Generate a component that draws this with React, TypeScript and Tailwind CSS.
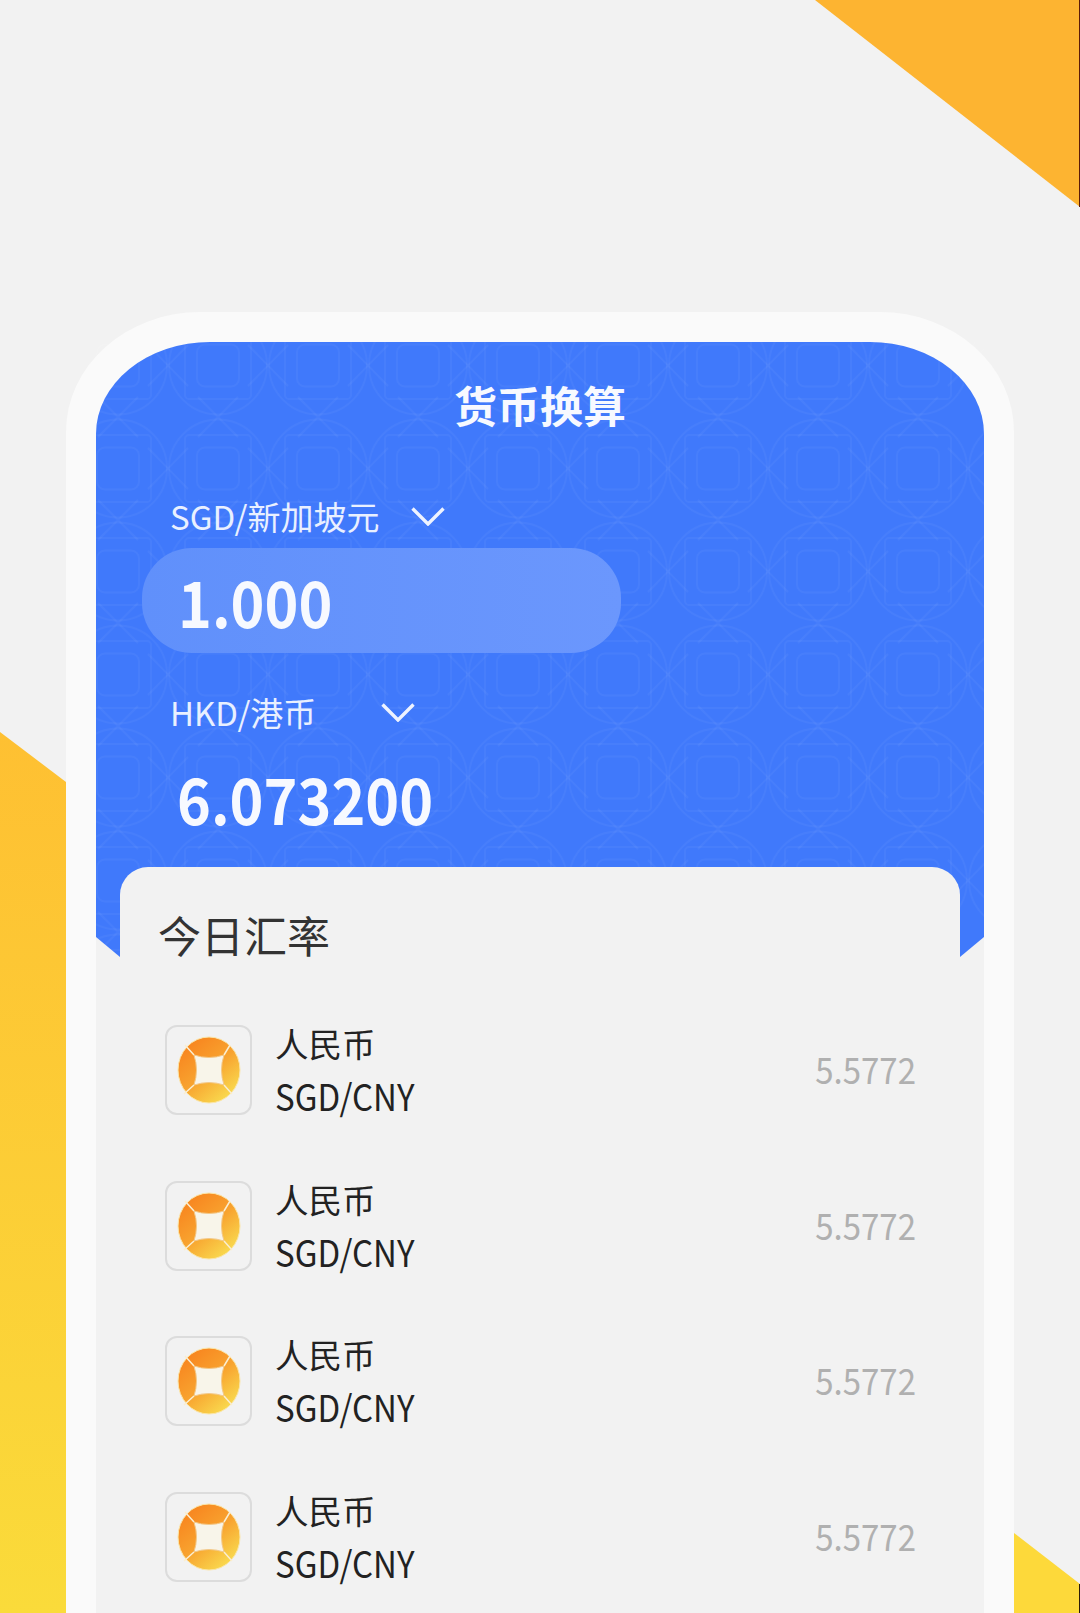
import React from "react";

const FONT = "[font-family:'Noto_Sans_CJK_SC','Noto_Sans',sans-serif]";

function Decor() {
  return (
    <svg className="absolute inset-0" width="1080" height="1613" viewBox="0 0 1080 1613">
      <defs>
        <linearGradient id="leftFill" x1="0" y1="732" x2="0" y2="1613" gradientUnits="userSpaceOnUse">
          <stop offset="0" stopColor="#fec032" />
          <stop offset="1" stopColor="#fadb3a" />
        </linearGradient>
      </defs>
      <polygon points="815,0 1080,0 1080,207" fill="#fdb431" />
      <polygon points="0,732 66,782 66,1613 0,1613" fill="url(#leftFill)" />
      <polygon points="1014,1533 1080,1584 1080,1613 1014,1613" fill="#fdd93a" />
      <rect x="1079" y="0" width="1" height="207" fill="#5c1c08" />
      <rect x="1079" y="1584" width="1" height="29" fill="#2a1c08" />
    </svg>
  );
}

function Pattern() {
  return (
    <svg className="absolute inset-0 h-full w-full">
      <defs>
        <pattern id="gems" width="100" height="103" patternUnits="userSpaceOnUse" patternTransform="translate(-28,-28)">
          <g fill="none" stroke="#ffffff" strokeOpacity="0.04" strokeWidth="1.8">
            <rect x="29" y="30.5" width="42" height="42" rx="8" />
            <rect x="17" y="18" width="66" height="67" rx="4" />
            <circle cx="50" cy="51.5" r="49" />
            <path d="M-20 31 L20 72 M-20 72 L20 31 M80 31 L120 72 M80 72 L120 31 M30 -20 L70 20 M70 -20 L30 20 M30 83 L70 123 M70 83 L30 123" />
          </g>
        </pattern>
      </defs>
      <rect width="100%" height="100%" fill="url(#gems)" />
    </svg>
  );
}

function Chevron({ className }: { className: string }) {
  return (
    <svg className={className} viewBox="0 0 34 19" fill="none">
      <path d="M1.5 1.5 L17 17 L32.5 1.5" stroke="#eef3ff" strokeWidth="3.4" />
    </svg>
  );
}

function Coin({ id }: { id: string }) {
  return (
    <svg width="64" height="68" viewBox="0 0 64 68">
      <defs>
        <linearGradient id={id} x1="0.15" y1="0.1" x2="0.8" y2="0.95">
          <stop offset="0" stopColor="#f8851f" />
          <stop offset="0.5" stopColor="#f8a32f" />
          <stop offset="1" stopColor="#f9dc50" />
        </linearGradient>
      </defs>
      <ellipse cx="32" cy="34" rx="31" ry="33" fill={`url(#${id})`} stroke="#fbe6a8" strokeWidth="1" />
      <path d="M17 19 L8 9 M47 19 L53 9 M17 49 L7 58 M47 49 L55 58" stroke="#fbeed0" strokeWidth="1.5" />
      <path
        d="M17 19 Q32 24 47 19 Q42 34 47 49 Q32 44 17 49 Q22 34 17 19 Z"
        fill="#f8f5ea"
        stroke="#f3c98a"
        strokeWidth="1"
      />
    </svg>
  );
}

function RateRow({ id }: { id: string }) {
  return (
    <div className="flex items-center">
      <div className="flex h-[90px] w-[87px] items-center justify-center rounded-[12px] border-2 border-[#dcdcdc]">
        <Coin id={id} />
      </div>
      <div className="ml-[23px] flex flex-col text-[#222222]">
        <span className="h-[52px] text-[33.5px] leading-[52px]">人民币</span>
        <span className="h-[54px] origin-left scale-y-[1.1] text-[33px] leading-[54px]">SGD/CNY</span>
      </div>
      <span className="mb-[2px] ml-auto scale-y-[1.1] text-[33px] leading-[50px] text-[#b0b0b0]">5.5772</span>
    </div>
  );
}

export default function App() {
  return (
    <div className={`relative h-[1613px] w-[1080px] overflow-hidden bg-[#f2f2f2] ${FONT}`}>
      <Decor />
      <div className="relative ml-[66px] mt-[312px] w-[948px] rounded-t-[134px_120px] bg-[#fafafa] pl-[30px] pr-[30px] pt-[30px]">
        <div className="rounded-t-[114px_92px] bg-[#f2f2f2]">
          <div className="relative h-[615px] rounded-t-[114px_92px] bg-[#4079fb] [clip-path:polygon(0_0,100%_0,100%_595px,864px_615px,24px_615px,0_595px)]">
            <Pattern />
            <div className="relative flex flex-col pt-[32px]">
              <h1 className="h-[60px] text-center text-[43px] font-bold leading-[60px] text-[#f7f9ff]">货币换算</h1>
              <div className="ml-[74px] mt-[59px] flex h-[46px] items-center text-[33px] leading-[46px] text-[#e9f0ff]">
                <span>SGD/新加坡元</span>
                <Chevron className="ml-[32px] h-[19px] w-[34px]" />
              </div>
              <div className="ml-[46px] mt-[9px] flex h-[105px] w-[479px] items-center rounded-[50px] bg-linear-to-r from-[#6090fb] to-[#6b97fd] pl-[36px] pb-[2px]">
                <span className="scale-y-[1.1] text-[57.5px] font-bold leading-[70px] text-[#f7f9ff]">1.000</span>
              </div>
              <div className="ml-[74px] mt-[36px] flex h-[46px] items-center text-[33px] leading-[46px] text-[#e9f0ff]">
                <span>HKD/港币</span>
                <Chevron className="ml-[65px] h-[19px] w-[34px]" />
              </div>
              <div className="ml-[81px] mt-[27px] h-[70px] origin-left scale-y-[1.1] text-[57.5px] font-bold leading-[70px] text-[#f7f9ff]">6.073200</div>
            </div>
          </div>
          <div className="relative mx-[24px] -mt-[90px] rounded-t-[28px] bg-[#f2f2f2] pl-[45px] pr-[44px] pt-[37px]">
            <h2 className="-ml-[7px] h-[60px] text-[43px] font-normal leading-[60px] text-[#333333]">今日汇率</h2>
            <div className="mt-[53px] flex flex-col gap-[49.5px] pb-[90px]">
              <RateRow id="coin1" />
              <RateRow id="coin2" />
              <RateRow id="coin3" />
              <RateRow id="coin4" />
            </div>
          </div>
        </div>
      </div>
    </div>
  );
}
